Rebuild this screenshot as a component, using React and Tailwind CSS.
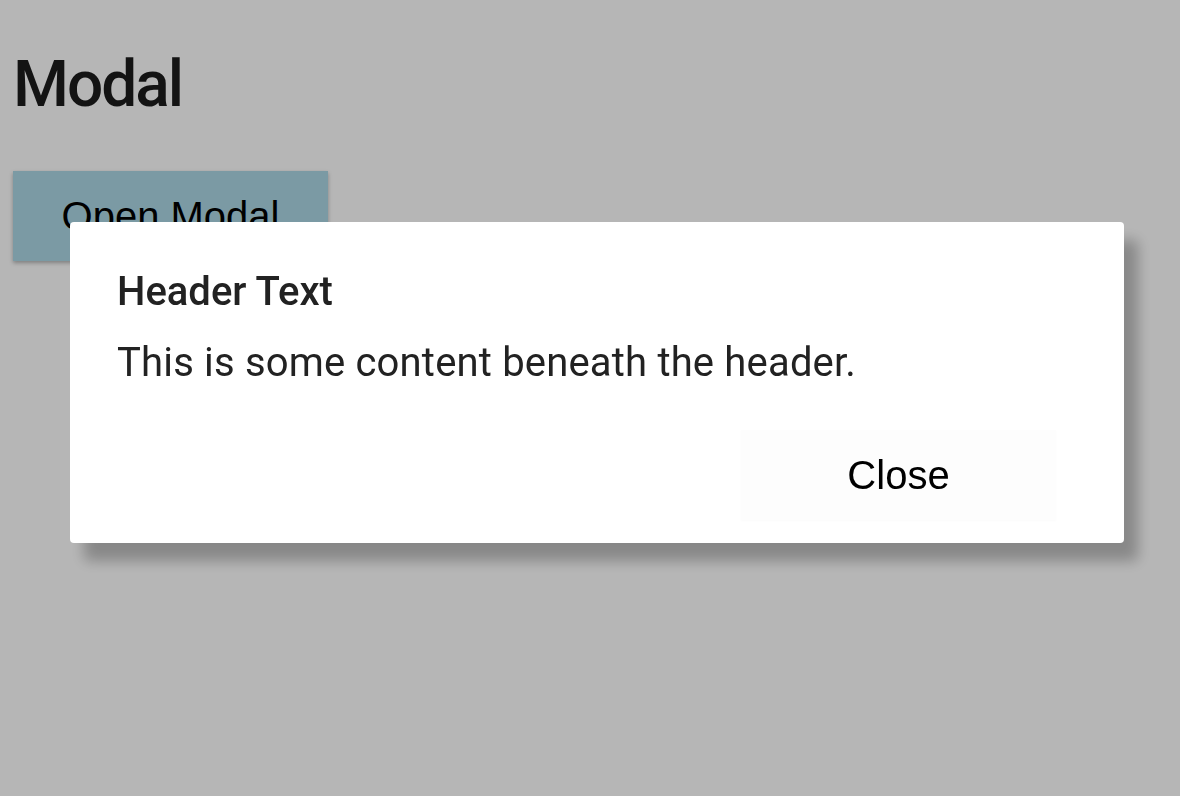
import { useState } from 'react';

const btn =
  "w-[315px] h-[90px] text-[40px] leading-[46px] text-black font-['Liberation_Sans',Arial,sans-serif]";

function Modal({ onClose }) {
  return (
    <>
      <div className="fixed inset-0 bg-black/[0.286]" onClick={onClose} />
      <div className="fixed left-[70px] top-[222px] w-[1054px] rounded bg-white pt-[46px] pl-[47px] pr-[44px] pb-[23px] shadow-[14px_18px_14px_rgba(0,0,0,0.26)]">
        <h2 className="text-[40px] leading-[47px] font-medium text-[#222]">Header Text</h2>
        <p className="mt-[24px] text-[40px] leading-[47px] tracking-[0.18px] text-[#222]">
          This is some content beneath the header.
        </p>
        <div className="mt-[44px] flex justify-end pr-[24px]">
          <button
            onClick={onClose}
            className={`${btn} bg-[#fdfdfd] shadow-[0_1px_2px_rgba(0,0,0,0.02)]`}
          >
            Close
          </button>
        </div>
      </div>
    </>
  );
}

export default function App() {
  const [open, setOpen] = useState(true);

  return (
    <div className="min-h-screen bg-white font-['Roboto',sans-serif] px-[13px] pt-[47px]">
      <h1 className="text-[64px] leading-[75px] font-medium tracking-[-2px] text-[#1b1b1b]">Modal</h1>
      <button
        onClick={() => setOpen(true)}
        className={`${btn} mt-[49px] bg-[#add8e6] shadow-[0_2px_4px_rgba(0,0,0,0.3)]`}
      >
        Open Modal
      </button>
      {open && <Modal onClose={() => setOpen(false)} />}
    </div>
  );
}
